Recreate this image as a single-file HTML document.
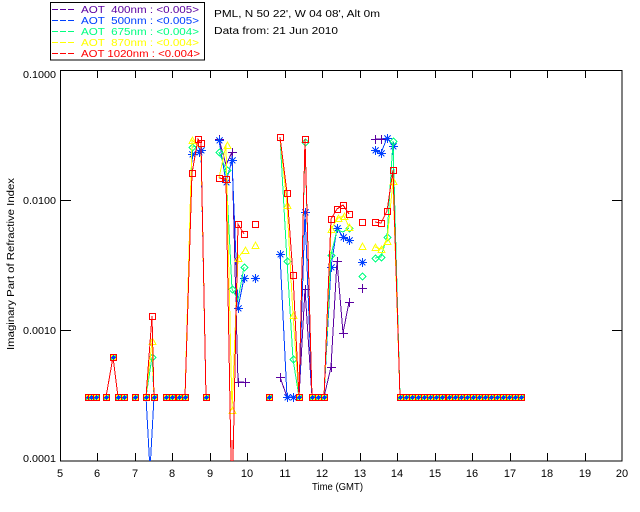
<!DOCTYPE html>
<html><head><meta charset="utf-8"><style>
html,body{margin:0;padding:0;background:#fff;width:640px;height:512px;overflow:hidden}
svg{display:block}
text{font-family:"Liberation Sans",sans-serif;font-size:10px;fill:#000;letter-spacing:0}
.m,polyline,line,rect{shape-rendering:crispEdges}
polyline{fill:none;stroke-width:1}
</style></head><body>
<svg width="640" height="512" viewBox="0 0 640 512" xmlns="http://www.w3.org/2000/svg">
<defs>
<path id="p" d="M-4 .5H5M.5 -4V5" fill="none" stroke="#5a00a0"/>
<g id="s"><path d="M-4 .5H5M.5 -4V5M-2.5 -2.5L3.5 3.5M-2.5 3.5L3.5 -2.5" fill="none" stroke="#0040ff"/><rect x="-1" y="-1" width="3" height="3" fill="#0040ff"/></g>
<path id="d" d="M.5 -3L4 .5L.5 4L-3 .5Z" fill="none" stroke="#00ff80"/>
<path id="t" d="M.5 -3L4 3.5H-3Z" fill="none" stroke="#ffff00"/>
<rect id="r" x="-2.5" y="-2.5" width="6" height="6" fill="none" stroke="#ff0000"/>
<g id="b"><rect x="-3" y="-3" width="7" height="7" fill="#ff0000"/><rect x="-2" y="-2" width="5" height="5" fill="#ffff00"/><rect x="-2" y="1" width="1" height="2" fill="#00ff80"/><rect x="2" y="-2" width="1" height="2" fill="#00ff80"/><rect x="-1" y="-1" width="3" height="3" fill="#0040ff"/><rect x="0" y="-2" width="1" height="5" fill="#0040ff"/><rect x="-2" y="0" width="5" height="1" fill="#0040ff"/></g>
</defs>

<!-- legend -->
<rect x="50.5" y="2.5" width="154" height="57.5" fill="none" stroke="#000"/>
<path d="M52 9.5H75" stroke="#5a00a0" stroke-dasharray="6 2" shape-rendering="crispEdges"/>
<path d="M52 20.5H75" stroke="#0040ff" stroke-dasharray="6 2" shape-rendering="crispEdges"/>
<path d="M52 31.5H75" stroke="#00ff80" stroke-dasharray="6 2" shape-rendering="crispEdges"/>
<path d="M52 42.5H75" stroke="#ffff00" stroke-dasharray="6 2" shape-rendering="crispEdges"/>
<path d="M52 53.5H75" stroke="#ff0000" stroke-dasharray="6 2" shape-rendering="crispEdges"/>
<text x="81" y="13" xml:space="preserve" textLength="118" lengthAdjust="spacingAndGlyphs" style="fill:#5a00a0">AOT  400nm : &lt;0.005&gt;</text>
<text x="81" y="24" xml:space="preserve" textLength="118" lengthAdjust="spacingAndGlyphs" style="fill:#0040ff">AOT  500nm : &lt;0.005&gt;</text>
<text x="81" y="35" xml:space="preserve" textLength="118" lengthAdjust="spacingAndGlyphs" style="fill:#00ff80">AOT  675nm : &lt;0.004&gt;</text>
<text x="81" y="46" xml:space="preserve" textLength="118" lengthAdjust="spacingAndGlyphs" style="fill:#ffff00">AOT  870nm : &lt;0.004&gt;</text>
<text x="81" y="57" xml:space="preserve" textLength="119" lengthAdjust="spacingAndGlyphs" style="fill:#ff0000">AOT 1020nm : &lt;0.004&gt;</text>
<text x="214" y="17" textLength="166" lengthAdjust="spacingAndGlyphs">PML, N 50 22', W 04 08', Alt 0m</text>
<text x="214" y="34" textLength="124" lengthAdjust="spacingAndGlyphs">Data from: 21 Jun 2010</text>

<!-- axes -->
<rect x="60.5" y="70.5" width="561.5" height="390.5" fill="none" stroke="#000"/>
<path stroke="#000" fill="none" shape-rendering="crispEdges" d="M97.5 70V78M135.5 70V78M172.5 70V78M210.5 70V78M247.5 70V78M285.5 70V78M322.5 70V78M360.5 70V78M397.5 70V78M435.5 70V78M472.5 70V78M510.5 70V78M547.5 70V78M585.5 70V78
M97.5 461V453M135.5 461V453M172.5 461V453M210.5 461V453M247.5 461V453M285.5 461V453M322.5 461V453M360.5 461V453M397.5 461V453M435.5 461V453M472.5 461V453M510.5 461V453M547.5 461V453M585.5 461V453
M61 200.5H71M61 330.5H71M622 200.5H612M622 330.5H612"/>
<g>
<text x="23" y="78" textLength="33" lengthAdjust="spacingAndGlyphs">0.1000</text>
<text x="23" y="204" textLength="33" lengthAdjust="spacingAndGlyphs">0.0100</text>
<text x="23" y="334" textLength="33" lengthAdjust="spacingAndGlyphs">0.0010</text>
<text x="23" y="462" textLength="33" lengthAdjust="spacingAndGlyphs">0.0001</text>
</g>
<g text-anchor="middle" style="font-size:11px">
<text x="60" y="477" style="font-size:11px">5</text><text x="97" y="477" style="font-size:11px">6</text><text x="135" y="477" style="font-size:11px">7</text><text x="172" y="477" style="font-size:11px">8</text><text x="210" y="477" style="font-size:11px">9</text><text x="247" y="477" style="font-size:11px">10</text><text x="285" y="477" style="font-size:11px">11</text><text x="322" y="477" style="font-size:11px">12</text><text x="360" y="477" style="font-size:11px">13</text><text x="397" y="477" style="font-size:11px">14</text><text x="435" y="477" style="font-size:11px">15</text><text x="472" y="477" style="font-size:11px">16</text><text x="510" y="477" style="font-size:11px">17</text><text x="547" y="477" style="font-size:11px">18</text><text x="585" y="477" style="font-size:11px">19</text><text x="622" y="477" style="font-size:11px">20</text>
</g>
<text x="312" y="490" textLength="51" lengthAdjust="spacingAndGlyphs">Time (GMT)</text>
<text transform="translate(14,350) rotate(-90)" x="0" y="0" textLength="172" lengthAdjust="spacingAndGlyphs">Imaginary Part of Refractive Index</text>

<svg x="61" y="71" width="561" height="390" viewBox="61 71 561 390" overflow="hidden">
<!-- purple -->
<g stroke="#5a00a0">
<polyline points="219,139 226,165 232,152 238,382 244,382"/>
<polyline points="280,377 287,397 293,397 299,397 305,289 312,397"/>
<polyline points="324,397 331,367 337,261 343,333 349,302"/>
<polyline points="375,139 381,139 387,138 393,146 400,397"/>
</g>
<g class="m">
<use href="#p" x="219" y="139"/><use href="#p" x="232" y="152"/><use href="#p" x="238" y="382"/><use href="#p" x="245" y="382"/>
<use href="#p" x="280" y="377"/><use href="#p" x="305" y="289"/><use href="#p" x="331" y="367"/><use href="#p" x="337" y="261"/><use href="#p" x="343" y="333"/><use href="#p" x="349" y="302"/><use href="#p" x="362" y="288"/><use href="#p" x="375" y="139"/><use href="#p" x="381" y="139"/>
</g>
<!-- blue -->
<g stroke="#0040ff">
<polyline points="106,397 113,357 118,397"/>
<polyline points="146,397 150,470 154,397"/>
<polyline points="185,397 192,154 199,152 201,150 206,397"/>
<polyline points="219,140 226,182 232,160 238,308 244,278"/>
<polyline points="280,254 287,397 293,397 299,397 305,212 312,397"/>
<polyline points="324,397 331,267 337,228 343,237 349,240"/>
<polyline points="375,150 381,153 387,138 393,146 400,397"/>
</g>
<g class="m">
<use href="#s" x="192" y="154"/><use href="#s" x="199" y="152"/><use href="#s" x="201" y="150"/><use href="#s" x="219" y="140"/><use href="#s" x="226" y="182"/><use href="#s" x="232" y="160"/><use href="#s" x="238" y="308"/><use href="#s" x="244" y="278"/><use href="#s" x="255" y="278"/>
<use href="#s" x="280" y="254"/><use href="#s" x="287" y="397"/><use href="#s" x="293" y="397"/><use href="#s" x="305" y="212"/><use href="#s" x="331" y="267"/><use href="#s" x="337" y="228"/><use href="#s" x="343" y="237"/><use href="#s" x="349" y="240"/><use href="#s" x="362" y="262"/><use href="#s" x="375" y="150"/><use href="#s" x="381" y="153"/><use href="#s" x="387" y="138"/><use href="#s" x="393" y="146"/>
</g>
<!-- green -->
<g stroke="#00ff80">
<polyline points="146,397 152,357 154,397"/>
<polyline points="185,397 192,147 198,146 201,148 206,397"/>
<polyline points="219,152 226,170 232,289 238,300 244,267"/>
<polyline points="280,137 287,261 293,359 299,397 305,142 312,397"/>
<polyline points="324,397 331,255 337,230 343,232 349,228"/>
<polyline points="375,258 381,257 387,237 393,141 400,397"/>
</g>
<g class="m">
<use href="#d" x="152" y="357"/><use href="#d" x="192" y="147"/><use href="#d" x="219" y="152"/><use href="#d" x="227" y="170"/><use href="#d" x="232" y="289"/><use href="#d" x="244" y="267"/>
<use href="#d" x="287" y="261"/><use href="#d" x="293" y="359"/><use href="#d" x="331" y="255"/><use href="#d" x="349" y="228"/><use href="#d" x="362" y="276"/><use href="#d" x="375" y="258"/><use href="#d" x="381" y="257"/><use href="#d" x="387" y="237"/><use href="#d" x="393" y="141"/><use href="#d" x="305" y="142"/>
</g>
<!-- yellow -->
<g stroke="#ffff00">
<polyline points="146,397 152,341 154,397"/>
<polyline points="185,397 192,140 198,146 201,148 206,397"/>
<polyline points="219,178 226,145 232,410 238,258 244,250"/>
<polyline points="280,137 287,205 293,315 299,397 305,139 312,397"/>
<polyline points="324,397 331,229 338,218 344,216 349,227"/>
<polyline points="375,247 381,249 387,241 393,181 400,397"/>
</g>
<g class="m">
<use href="#t" x="152" y="341"/><use href="#t" x="192" y="140"/><use href="#t" x="227" y="145"/><use href="#t" x="232" y="410"/><use href="#t" x="238" y="258"/><use href="#t" x="245" y="250"/><use href="#t" x="255" y="245"/>
<use href="#t" x="287" y="205"/><use href="#t" x="293" y="315"/><use href="#t" x="331" y="229"/><use href="#t" x="338" y="218"/><use href="#t" x="344" y="216"/><use href="#t" x="349" y="227"/><use href="#t" x="362" y="246"/><use href="#t" x="375" y="247"/><use href="#t" x="381" y="249"/><use href="#t" x="387" y="241"/><use href="#t" x="393" y="181"/>
</g>
<!-- red -->
<g stroke="#ff0000">
<polyline points="106,397 113,357 118,397"/>
<polyline points="146,397 152,316 154,397"/>
<polyline points="185,397 192,173 198,139 201,143 206,397"/>
<polyline points="219,178 226,179 231,461 232,461 233,461 238,224 244,234"/>
<polyline points="231,440 231,461 233,461 233,440"/>
<polyline points="280,137 287,193 293,275 299,397 305,139 312,397"/>
<polyline points="324,397 331,219 337,209 343,205 349,214"/>
<polyline points="375,222 381,223 387,211 393,170 400,397"/>
</g>
<g class="m">
<use href="#r" x="152" y="316"/><use href="#r" x="192" y="173"/><use href="#r" x="198" y="139"/><use href="#r" x="201" y="143"/><use href="#r" x="219" y="178"/><use href="#r" x="226" y="179"/><use href="#r" x="238" y="224"/><use href="#r" x="244" y="234"/><use href="#r" x="255" y="224"/>
<use href="#r" x="280" y="137"/><use href="#r" x="287" y="193"/><use href="#r" x="293" y="275"/><use href="#r" x="305" y="139"/><use href="#r" x="331" y="219"/><use href="#r" x="337" y="209"/><use href="#r" x="343" y="205"/><use href="#r" x="349" y="214"/><use href="#r" x="362" y="222"/><use href="#r" x="375" y="222"/><use href="#r" x="381" y="223"/><use href="#r" x="387" y="211"/><use href="#r" x="393" y="170"/>
</g>
<!-- points overlapping at the floor value -->
<g class="m">
<use href="#b" x="88" y="397"/><use href="#b" x="91" y="397"/><use href="#b" x="96" y="397"/><use href="#b" x="106" y="397"/><use href="#b" x="118" y="397"/><use href="#b" x="124" y="397"/><use href="#b" x="135" y="397"/><use href="#b" x="146" y="397"/><use href="#b" x="154" y="397"/><use href="#b" x="166" y="397"/><use href="#b" x="172" y="397"/><use href="#b" x="179" y="397"/><use href="#b" x="185" y="397"/><use href="#b" x="206" y="397"/><use href="#b" x="269" y="397"/><use href="#b" x="299" y="397"/><use href="#b" x="312" y="397"/><use href="#b" x="318" y="397"/><use href="#b" x="324" y="397"/>
<use href="#b" x="113" y="357"/>
<use href="#b" x="400" y="397"/><use href="#b" x="406" y="397"/><use href="#b" x="412" y="397"/><use href="#b" x="418" y="397"/><use href="#b" x="424" y="397"/><use href="#b" x="430" y="397"/><use href="#b" x="436" y="397"/><use href="#b" x="442" y="397"/><use href="#b" x="449" y="397"/><use href="#b" x="455" y="397"/><use href="#b" x="461" y="397"/><use href="#b" x="467" y="397"/><use href="#b" x="473" y="397"/><use href="#b" x="479" y="397"/><use href="#b" x="485" y="397"/><use href="#b" x="491" y="397"/><use href="#b" x="497" y="397"/><use href="#b" x="503" y="397"/><use href="#b" x="509" y="397"/><use href="#b" x="515" y="397"/><use href="#b" x="521" y="397"/>
</g>
</svg>
</svg>
</body></html>
